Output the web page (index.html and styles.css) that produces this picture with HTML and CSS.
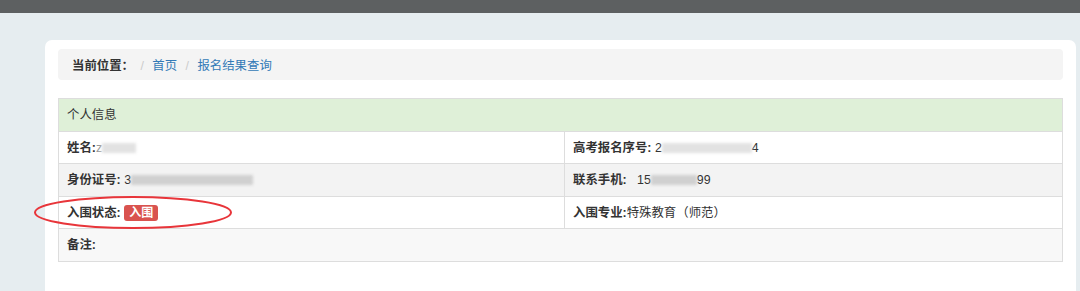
FILE: index.html
```html
<!DOCTYPE html>
<html lang="zh-CN">
<head>
    <meta charset="UTF-8">
    <title>报名结果查询</title>
    <link rel="stylesheet" href="styles.css">
</head>
<body>

<div class="topbar"></div>

<div class="page">
    <div class="card">
        <div class="breadcrumb">
            <span class="crumb-label">当前位置：</span>
            <span class="sep">/</span>
            <a href="#">首页</a>
            <span class="sep">/</span>
            <a href="#">报名结果查询</a>
        </div>

        <table class="info-table">
            <colgroup>
                <col class="col-left">
                <col>
            </colgroup>
            <thead>
                <tr>
                    <th colspan="2">个人信息</th>
                </tr>
            </thead>
            <tbody>
                <tr>
                    <td><b>姓名:</b><span class="partial">z</span><span class="blur" style="width: 34px"></span></td>
                    <td><b>高考报名序号:</b> 2<span class="blur" style="width: 90px"></span>4</td>
                </tr>
                <tr class="row-grey">
                    <td><b>身份证号:</b> 3<span class="blur dark" style="width: 122px"></span></td>
                    <td><b>联系手机:</b>&nbsp;&nbsp;&nbsp;15<span class="blur dark" style="width: 46px"></span>99</td>
                </tr>
                <tr>
                    <td class="status-cell">
                        <b>入围状态:</b> <span class="badge">入围</span>
                        <svg class="circle" width="204" height="37" viewBox="0 0 204 37">
                            <ellipse cx="102" cy="18.5" rx="98" ry="15.5" fill="none" stroke="#e8353a" stroke-width="2"/>
                        </svg>
                    </td>
                    <td><b>入围专业:</b>特殊教育（师范）</td>
                </tr>
                <tr class="row-light">
                    <td colspan="2"><b>备注:</b></td>
                </tr>
            </tbody>
        </table>
    </div>
</div>

</body>
</html>
```

FILE: styles.css
```css
body {
    margin: 0;
    background-color: #e6edf0;
    font-family: "Liberation Sans", "Noto Sans CJK SC", sans-serif;
    font-size: 12.4px;
    color: #333;
}
.topbar {
    height: 13px;
    background-color: #5d6061;
}
.page {
    padding: 27px 4px 0 45px;
}
.card {
    background-color: #fff;
    border-radius: 7px 7px 0 0;
    padding: 9px 13px 40px;
}
.breadcrumb {
    background-color: #f4f4f4;
    border-radius: 4px;
    height: 29px;
    line-height: 31px;
    padding: 2px 0 0 14px;
    margin-bottom: 18px;
    overflow: hidden;
}
.crumb-label {
    font-weight: bold;
    margin-right: -2px;
}
.breadcrumb a {
    color: #337ab7;
    text-decoration: none;
}
.sep {
    color: #ccc;
    padding: 0 5px;
}
.info-table {
    width: 100%;
    border-collapse: collapse;
}
.col-left {
    width: 506px;
}
th, td {
    border: 1px solid #ddd;
    padding: 7px 8px 5px;
    line-height: 19.6px;
    text-align: left;
    font-weight: normal;
}
th {
    background-color: #dff0d8;
}
td b {
    font-weight: bold;
}
.row-grey td {
    background-color: #f3f3f3;
}
.row-light td {
    background-color: #f8f8f8;
}
.partial {
    color: #999;
}
.blur {
    display: inline-block;
    height: 10px;
    vertical-align: -1px;
    background-color: #e2e2e2;
    filter: blur(1.5px);
}
.blur.dark {
    background-color: #d0d0d0;
}
.status-cell {
    position: relative;
}
.badge {
    display: inline-block;
    background-color: #d9534f;
    color: #fff;
    font-weight: bold;
    font-size: 12px;
    line-height: 16px;
    padding: 0 5px;
    border-radius: 3px;
    vertical-align: 0;
}
.circle {
    position: absolute;
    left: -28px;
    top: -3px;
}
```
